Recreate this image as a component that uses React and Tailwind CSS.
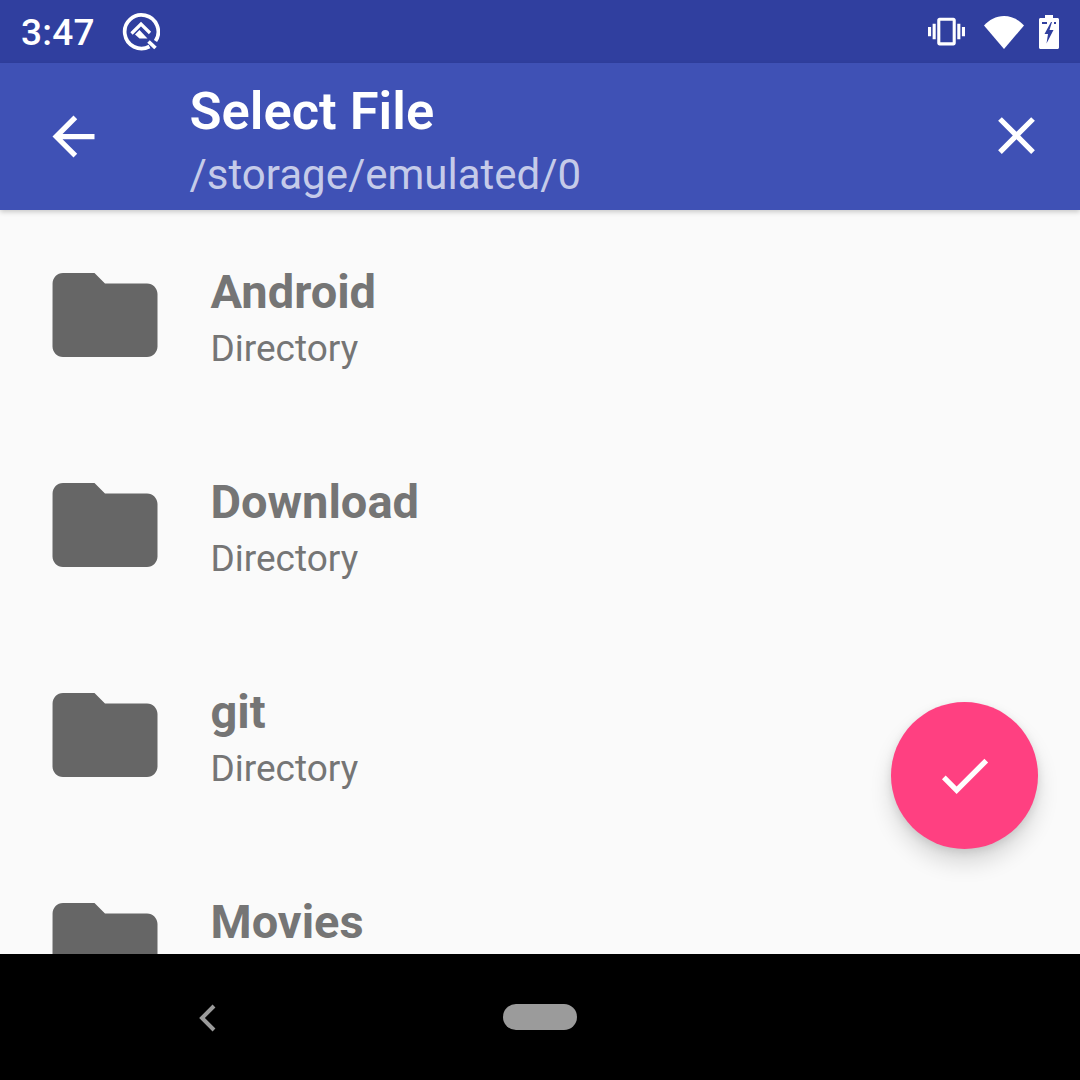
const rows = ['Android', 'Download', 'git', 'Movies']

function FolderIcon() {
  return (
    <svg viewBox="0 0 24 24" className="w-[126px] h-[126px] shrink-0" fill="#666666">
      <path d="M10 4H4c-1.1 0-1.99.9-1.99 2L2 18c0 1.1.9 2 2 2h16c1.1 0 2-.9 2-2V8c0-1.1-.9-2-2-2h-8l-2-2z" />
    </svg>
  )
}

function StatusBar() {
  return (
    <div className="h-[63px] shrink-0 bg-[#303f9f] flex items-center pl-[21px] pr-[21px] text-white">
      <span className="text-[37px] font-medium tracking-[0.2px] leading-none mt-[2px]">3:47</span>
      <svg viewBox="0 0 38 38" className="w-[38px] h-[38px] ml-[27px] mt-[1px]" fill="none" stroke="#fff">
        <path d="M27.500 33.500A16.800 16.800 0 1 1 33.500 28" strokeWidth="3.700" />
        <path d="M9.500 20.500L19 11l9 9" strokeWidth="3.200" />
        <path d="M13 21.500l4.500-4.500 8 8.500h-8z" fill="#fff" stroke="none" />
        <path d="M26.500 28.500l7 6.500" strokeWidth="3.700" />
      </svg>
      <div className="ml-auto flex items-center">
        <svg viewBox="0 0 24 24" className="w-[37px] h-[37px] -ml-[2px]" fill="#fff">
          <path d="M0 15h2V9H0v6zm3 2h2V7H3v10zm19-8v6h2V9h-2zm-3 8h2V7h-2v10zM16.500 3h-9C6.670 3 6 3.670 6 4.500v15c0 .83.67 1.500 1.500 1.500h9c.83 0 1.500-.67 1.500-1.500v-15c0-.83-.67-1.500-1.500-1.500zM16 19H8V5h8v14z" />
        </svg>
        <svg viewBox="0 0 40 34" className="w-[40px] h-[34px] ml-[19px]" fill="#fff">
          <path d="M0 10.500C5 5 12 1 20 1s15 4 20 9.500L20 34z" />
        </svg>
        <svg viewBox="0 0 20 34" className="w-[20px] h-[34px] ml-[15px]" fill="#fff">
          <path fillRule="evenodd" d="M6 0h8v3h4.500c.8 0 1.500.7 1.500 1.500v28c0 .8-.7 1.500-1.500 1.500h-17C.7 34 0 33.300 0 32.500v-28C0 3.700.7 3 1.500 3H6zM3 7v2h5V7zM15 7v2h2V7zM12 7L5.500 19H9l-1.500 9.500L14.500 15H10.500L13 7z" />
        </svg>
      </div>
    </div>
  )
}

function Toolbar() {
  return (
    <div className="relative z-10 h-[147px] shrink-0 bg-[#3f51b5] flex items-center shadow-[0_2px_5px_rgba(0,0,0,0.2)]">
      <svg viewBox="0 0 24 24" className="w-[63px] h-[63px] ml-[42px] shrink-0" fill="#fff">
        <path d="M20 11H7.830l5.590-5.590L12 4l-8 8 8 8 1.410-1.410L7.830 13H20v-2z" />
      </svg>
      <div className="ml-[84.500px] flex-1 pt-[9px]">
        <div className="text-[52.500px] font-semibold text-white leading-[62px] -mt-[3px]">Select File</div>
        <div className="text-[42px] text-[#c5cbe9] leading-[50px] mt-[8px]">/storage/emulated/0</div>
      </div>
      <svg viewBox="0 0 24 24" className="w-[63px] h-[63px] mr-[32px] -mt-[3px] shrink-0" fill="#fff">
        <path d="M19 6.410L17.590 5 12 10.590 6.410 5 5 6.410 10.590 12 5 17.590 6.410 19 12 13.410 17.590 19 19 17.590 13.410 12z" />
      </svg>
    </div>
  )
}

function NavBar() {
  return (
    <div className="h-[126px] shrink-0 bg-black flex items-center justify-center relative">
      <div className="w-[74px] h-[26px] rounded-full bg-[#9b9b9b]" />
      <svg viewBox="0 0 18 28" className="absolute left-[198px] top-[50px] w-[18px] h-[28px]" fill="none" stroke="#9b9b9b" strokeWidth="4">
        <path d="M16 2L4 14l12 12" />
      </svg>
    </div>
  )
}

export default function App() {
  return (
    <div className="w-[1080px] h-[1080px] flex flex-col overflow-hidden font-['Roboto',sans-serif]">
      <StatusBar />
      <Toolbar />
      <div className="relative flex-1 bg-[#fafafa] overflow-hidden">
        {rows.map(name => (
          <div key={name} className="h-[210px] flex items-center pl-[42px]">
            <FolderIcon />
            <div className="ml-[42.500px] pt-[8px]">
              <div className="text-[47px] font-bold text-[#757575] leading-[56px]">{name}</div>
              <div className="text-[37px] text-[#757575] leading-[50px] mt-[4px]">Directory</div>
            </div>
          </div>
        ))}
        <button type="button" className="absolute left-[891px] top-[492px] w-[147px] h-[147px] rounded-full bg-[#ff4081] flex items-center justify-center shadow-[0_14px_22px_rgba(0,0,0,0.14),0_3px_8px_rgba(0,0,0,0.1)]">
          <svg viewBox="0 0 24 24" className="w-[63px] h-[63px]" fill="#fff">
            <path d="M9 16.170L4.830 12l-1.410 1.410L9 19 21 7l-1.410-1.410z" />
          </svg>
        </button>
      </div>
      <NavBar />
    </div>
  )
}
